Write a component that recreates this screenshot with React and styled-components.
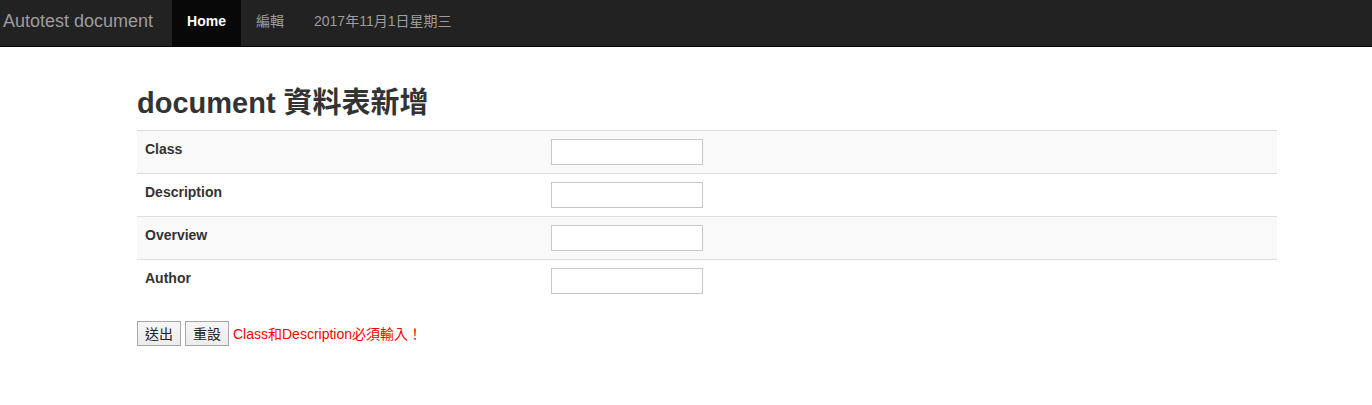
import React from 'react';
import styled, { createGlobalStyle } from 'styled-components';

const GlobalStyle = createGlobalStyle`
  * { box-sizing: border-box; }
  body {
    margin: 0;
    background: #fff;
    color: #333;
    font-family: "Liberation Sans", Arial, "Noto Sans CJK TC", sans-serif;
    font-size: 14px;
    line-height: 20px;
  }
`;

const Navbar = styled.nav`
  display: flex;
  align-items: stretch;
  height: 47px;
  background: #222;
  border-bottom: 1px solid #080808;
`;

const Brand = styled.a`
  display: block;
  padding: 11px 19px 0 3px;
  font-size: 18px;
  line-height: 20px;
  color: #9d9d9d;
  text-decoration: none;
`;

const NavLink = styled.a`
  display: block;
  padding: 11px 15px 0;
  font-size: 14px;
  font-weight: ${p => (p.$active ? 'bold' : 'normal')};
  line-height: 20px;
  text-decoration: none;
  color: ${p => (p.$active ? '#fff' : '#9d9d9d')};
  background: ${p => (p.$active ? '#080808' : 'transparent')};
`;

const Container = styled.main`
  width: 1140px;
  margin-left: 137px;
  padding-top: 40px;
`;

const Title = styled.h2`
  margin: 0 0 10px;
  font-size: 29px;
  line-height: 33px;
  font-weight: bold;
  color: #333;
`;

const Table = styled.div`
  margin-bottom: 19px;
`;

const Row = styled.div`
  display: grid;
  grid-template-columns: 406px 1fr;
  border-top: 1px solid #ddd;
  background: ${p => (p.$striped ? '#f9f9f9' : 'transparent')};
`;

const Label = styled.div`
  padding: 8px;
  font-weight: bold;
  line-height: 20px;
`;

const Cell = styled.div`
  padding: 8px;
`;

const TextInput = styled.input`
  display: block;
  width: 152px;
  height: 26px;
  margin: 0;
  border: 1px solid #c8c8c8;
  background: #fff;
  font: inherit;
`;

const Actions = styled.div`
  display: flex;
  align-items: center;
  gap: 4px;
`;

const Button = styled.button`
  height: 25px;
  padding: 0 7px;
  border: 1px solid #a6a6a6;
  background: linear-gradient(#f6f6f6, #ececec);
  color: #222;
  font-family: "Liberation Sans", "Noto Sans CJK TC", sans-serif;
  font-size: 14px;
  line-height: 20px;
`;

const Warning = styled.span`
  color: #f00;
  font-size: 14px;
`;

const fields = ['Class', 'Description', 'Overview', 'Author'];

export default function App() {
  return (
    <>
      <GlobalStyle />
      <Navbar>
        <Brand href="#">Autotest document</Brand>
        <NavLink href="#" $active>Home</NavLink>
        <NavLink href="#">編輯</NavLink>
        <NavLink href="#">2017年11月1日星期三</NavLink>
      </Navbar>
      <Container>
        <Title>document 資料表新增</Title>
        <Table>
          {fields.map((f, i) => (
            <Row key={f} $striped={i % 2 === 0}>
              <Label>{f}</Label>
              <Cell>
                <TextInput type="text" />
              </Cell>
            </Row>
          ))}
        </Table>
        <Actions>
          <Button type="submit">送出</Button>
          <Button type="reset">重設</Button>
          <Warning>Class和Description必須輸入！</Warning>
        </Actions>
      </Container>
    </>
  );
}
